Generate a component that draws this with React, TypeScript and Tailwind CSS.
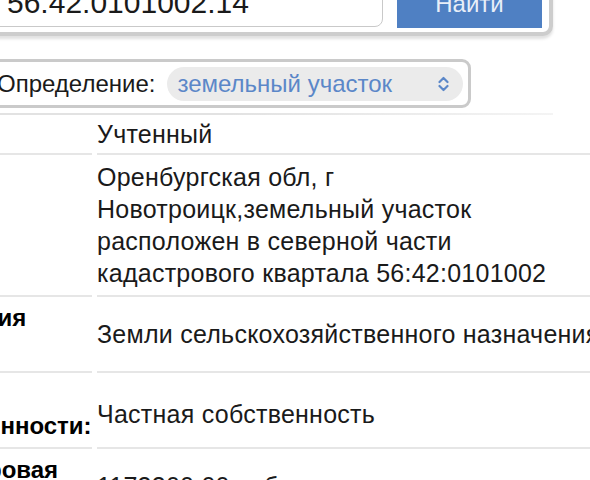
import React from "react";

function Chevrons() {
  return (
    <svg width="11" height="16" viewBox="0 0 11 16" fill="none" stroke="#5b87c8" strokeWidth="2.2" strokeLinecap="round" strokeLinejoin="round">
      <path d="M1.5 6 L5.5 2 L9.5 6" />
      <path d="M1.5 10 L5.5 14 L9.5 10" />
    </svg>
  );
}

function Row({
  label,
  children,
  cellPad = "py-[5px]",
  valueClass = "",
}: {
  label: React.ReactNode;
  children: React.ReactNode;
  cellPad?: string;
  valueClass?: string;
}) {
  return (
    <div className="flex gap-[5px]">
      <div className={"w-[187px] shrink-0 border-b-2 border-[#e6e6e6] flex items-center font-bold text-black text-[24px] leading-[32px] " + cellPad}>
        <div>{label}</div>
      </div>
      <div className={"w-[580px] shrink-0 border-b-2 border-[#e6e6e6] flex items-center text-[25px] tracking-[0.25px] leading-[32px] whitespace-nowrap text-[#1a1a1a] " + cellPad}>
        <div className={valueClass}>{children}</div>
      </div>
    </div>
  );
}

export default function App() {
  return (
    <div className="w-[590px] h-[480px] overflow-hidden bg-white font-['Liberation_Sans',Arial,sans-serif] text-[24px] text-[#111]">
      {/* search panel */}
      <div className="-mt-[32px] -ml-[30px] w-[583px] flex gap-[14px] border-[4px] border-[#cdcdcd] rounded-[10px] bg-white pt-[4px] pr-[7px] pb-[4px] pl-[10px] shadow-[0_3px_3px_rgba(0,0,0,0.12)]">
        <div className="flex-1 self-end mb-[1px] h-[50px] border-[1.5px] border-[#c9c9c9] rounded-[8px] bg-white flex items-center pl-[22px] text-[30px] text-[#1a1a1a]">
          56:42:0101002:14
        </div>
        <div className="w-[145px] h-[52px] shrink-0 bg-[#4f80c3] flex items-center justify-center pt-[4px] text-[24px] text-[#e8eef8]">
          Найти
        </div>
      </div>

      {/* definition select */}
      <div className="mt-[23px] -ml-[20px] w-[491px] border-[3px] border-[#cacaca] rounded-[9px] bg-white flex items-center pl-[14px] pr-[5px] pt-[4px] pb-[3px]">
        <span className="shrink-0 text-[#1a1a1a]">Определение:</span>
        <div className="ml-[12px] flex-1 h-[34px] rounded-full bg-[#ebebeb] flex items-center justify-between pl-[10px] pr-[14px]">
          <span className="text-[#5b87c8]">земельный участок</span>
          <Chevrons />
        </div>
      </div>

      <div className="mt-[5px] -ml-[95px] w-[648px] h-[2px] bg-gradient-to-r from-[#e2e2e2] via-[#e2e2e2] to-[#f4f4f4]" />

      {/* table */}
      <div className="-ml-[95px]">
        <Row label="Статус:" cellPad="py-[3px]">Учтенный</Row>
        <Row label="Адрес:" cellPad="py-[6px]">
          Оренбургская обл, г<br />
          Новотроицк,земельный участок<br />
          расположен в северной части<br />
          кадастрового квартала 56:42:0101002
        </Row>
        <Row label="Категория земель:">Земли сельскохозяйственного назначения</Row>
        <Row label="Форма собственности:" valueClass="pt-[8px]">Частная собственность</Row>
        <Row label="Кадастровая стоимость:">1173300,00 руб.</Row>
      </div>
    </div>
  );
}
